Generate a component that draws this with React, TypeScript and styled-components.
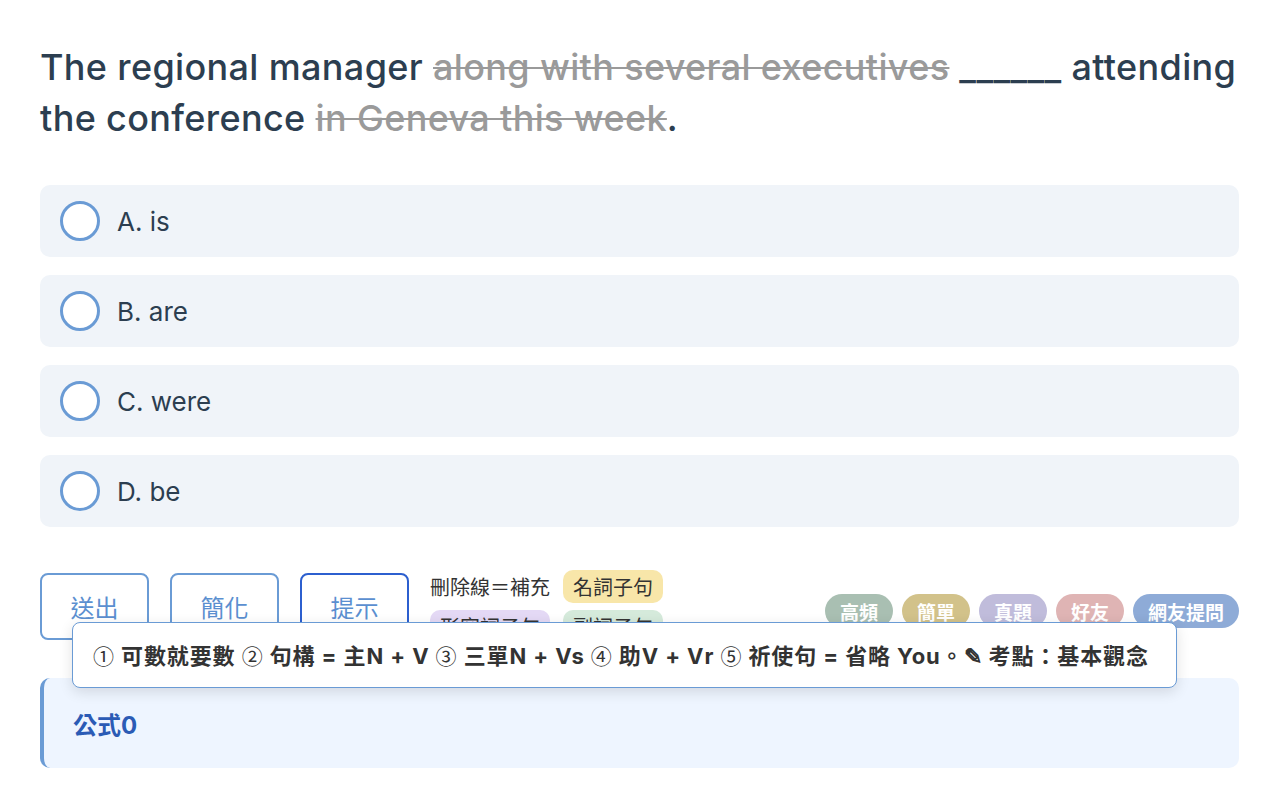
import React from "react";
import styled, { createGlobalStyle } from "styled-components";

const Global = createGlobalStyle`
  html, body { margin: 0; padding: 0; background: #ffffff; }
  body {
    font-family: Inter, "Noto Sans CJK TC", sans-serif;
    color: #2c3e50;
  }
`;

const Page = styled.div`
  padding: 42px 40px 40px;
`;

const Question = styled.div`
  font-size: 36px;
  line-height: 51px;
  font-weight: 500;
  letter-spacing: 0.35px;
  color: #2c3e50;
  margin: 0 0 41px;
`;

const Strike = styled.span`
  color: #9a9a9a;
  text-decoration: line-through;
  text-decoration-color: #9a9a9a;
  text-decoration-thickness: 2px;
`;

const Options = styled.div`
  display: flex;
  flex-direction: column;
  gap: 18px;
`;

const Option = styled.div`
  display: flex;
  align-items: center;
  gap: 17px;
  height: 72px;
  padding-left: 20px;
  background: #f0f4f9;
  border-radius: 10px;
  font-size: 26px;
  color: #2c3e50;
`;

const Radio = styled.span`
  box-sizing: border-box;
  width: 40px;
  height: 40px;
  border-radius: 50%;
  border: 3px solid #6a9bd5;
  background: #ffffff;
  flex: none;
`;

const ActionRow = styled.div`
  position: relative;
  display: flex;
  align-items: flex-start;
  gap: 21px;
  margin-top: 43px;
  height: 73px;
`;

const ActionButton = styled.button<{ $active?: boolean }>`
  box-sizing: border-box;
  width: 109px;
  height: 67px;
  margin-top: 3px;
  border-radius: 8px;
  border: 2px solid ${(p) => (p.$active ? "#2c5fcf" : "#6a9bd5")};
  background: #ffffff;
  color: #5b8fd0;
  font-family: "Noto Sans CJK TC", sans-serif;
  font-size: 24px;
  padding: 0;
  flex: none;
`;

const Legend = styled.div`
  width: 235px;
  display: flex;
  flex-wrap: wrap;
  gap: 7px 13px;
  font-family: "Noto Sans CJK TC", sans-serif;
`;

const LegendLabel = styled.span`
  height: 33px;
  display: flex;
  align-items: center;
  font-size: 20px;
  color: #333333;
`;

const LegendTag = styled.span<{ $bg: string }>`
  height: 33px;
  display: flex;
  align-items: center;
  padding: 0 10px;
  border-radius: 10px;
  background: ${(p) => p.$bg};
  font-size: 20px;
  color: #333333;
`;

const Badges = styled.div`
  margin-left: auto;
  margin-top: 24px;
  display: flex;
  gap: 9px;
`;

const Badge = styled.span<{ $bg: string }>`
  height: 34px;
  display: flex;
  align-items: center;
  padding: 0 15px;
  border-radius: 17px;
  background: ${(p) => p.$bg};
  color: #ffffff;
  font-family: "Noto Sans CJK TC", sans-serif;
  font-weight: 700;
  font-size: 19px;
`;

const Popover = styled.div`
  position: absolute;
  left: 32px;
  top: 52px;
  box-sizing: border-box;
  width: 1105px;
  height: 66px;
  display: flex;
  align-items: center;
  padding-left: 20px;
  background: #ffffff;
  border: 1.5px solid #6a9bd5;
  border-radius: 8px;
  box-shadow: 0 4px 14px rgba(0, 0, 0, 0.12);
  z-index: 2;
`;

const PopoverText = styled.span`
  font-family: Inter, "Noto Sans CJK TC", sans-serif;
  font-weight: 700;
  font-size: 22px;
  letter-spacing: 0.9px;
  color: #333333;
  white-space: pre;
  margin-top: -2px;
`;

const Circled = styled.span`
  font-family: "Noto Sans CJK TC", sans-serif;
  font-weight: 400;
  font-size: 21px;
`;

const Formula = styled.div`
  margin-top: 35px;
  height: 90px;
  box-sizing: border-box;
  display: flex;
  align-items: center;
  padding-left: 29px;
  background: #eef5ff;
  border-left: 4px solid #6a9bd5;
  border-radius: 10px;
  font-family: Inter, "Noto Sans CJK TC", sans-serif;
  font-weight: 700;
  font-size: 24px;
  color: #2b5bb5;
`;

const options = ["A. is", "B. are", "C. were", "D. be"];

const badges: [string, string][] = [
  ["高頻", "#a9bfb2"],
  ["簡單", "#d2c28a"],
  ["真題", "#c0bcdb"],
  ["好友", "#dfb4b4"],
  ["網友提問", "#8eabd7"],
];

const hints: [string, string][] = [
  ["①", "可數就要數"],
  ["②", "句構 = 主N + V"],
  ["③", "三單N + Vs"],
  ["④", "助V + Vr"],
  ["⑤", "祈使句 = 省略 You。✎ 考點：基本觀念"],
];

export default function App() {
  return (
    <Page>
      <Global />
      <Question>
        The regional manager <Strike>along with several executives</Strike> ______ attending the conference{" "}
        <Strike>in Geneva this week</Strike>.
      </Question>
      <Options>
        {options.map((o) => (
          <Option key={o}>
            <Radio />
            {o}
          </Option>
        ))}
      </Options>
      <ActionRow>
        <ActionButton>送出</ActionButton>
        <ActionButton>簡化</ActionButton>
        <ActionButton $active>提示</ActionButton>
        <Legend>
          <LegendLabel>刪除線＝補充</LegendLabel>
          <LegendTag $bg="#f8e6a9">名詞子句</LegendTag>
          <LegendTag $bg="#e4d9f5">形容詞子句</LegendTag>
          <LegendTag $bg="#d5eadb">副詞子句</LegendTag>
        </Legend>
        <Badges>
          {badges.map(([t, c]) => (
            <Badge key={t} $bg={c}>
              {t}
            </Badge>
          ))}
        </Badges>
        <Popover>
          <PopoverText>
            {hints.map(([n, t], i) => (
              <React.Fragment key={n}>
                {i > 0 ? " " : ""}
                <Circled>{n}</Circled>
                {" " + t}
              </React.Fragment>
            ))}
          </PopoverText>
        </Popover>
      </ActionRow>
      <Formula>公式0</Formula>
    </Page>
  );
}
